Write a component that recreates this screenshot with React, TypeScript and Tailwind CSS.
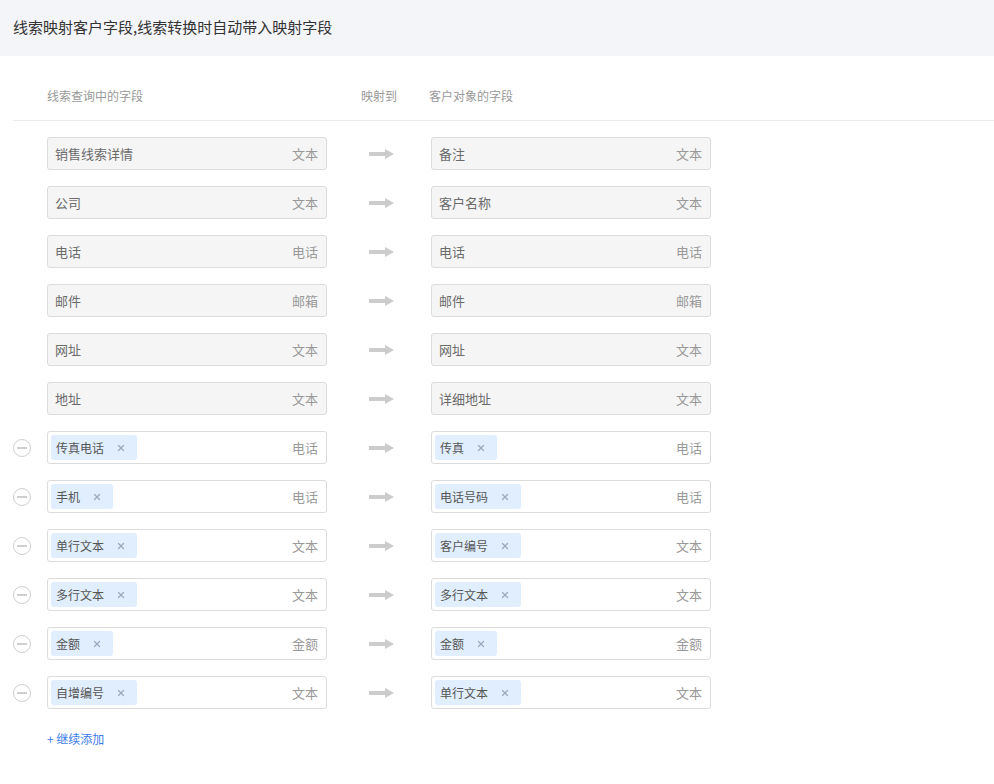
import { X } from "lucide-react";

type Row = {
  left: string;
  leftType: string;
  right: string;
  rightType: string;
  custom?: boolean;
};

const rows: Row[] = [
  { left: "销售线索详情", leftType: "文本", right: "备注", rightType: "文本" },
  { left: "公司", leftType: "文本", right: "客户名称", rightType: "文本" },
  { left: "电话", leftType: "电话", right: "电话", rightType: "电话" },
  { left: "邮件", leftType: "邮箱", right: "邮件", rightType: "邮箱" },
  { left: "网址", leftType: "文本", right: "网址", rightType: "文本" },
  { left: "地址", leftType: "文本", right: "详细地址", rightType: "文本" },
  { left: "传真电话", leftType: "电话", right: "传真", rightType: "电话", custom: true },
  { left: "手机", leftType: "电话", right: "电话号码", rightType: "电话", custom: true },
  { left: "单行文本", leftType: "文本", right: "客户编号", rightType: "文本", custom: true },
  { left: "多行文本", leftType: "文本", right: "多行文本", rightType: "文本", custom: true },
  { left: "金额", leftType: "金额", right: "金额", rightType: "金额", custom: true },
  { left: "自增编号", leftType: "文本", right: "单行文本", rightType: "文本", custom: true },
];

function FieldBox({ label, type, custom }: { label: string; type: string; custom?: boolean }) {
  if (!custom) {
    return (
      <div className="w-[280px] h-[33px] flex items-center justify-between pl-[7px] pr-2 bg-[#f5f5f5] border border-[#dcdcdc] rounded-[3px] text-[13px]">
        <span className="text-[#6b6b6b]">{label}</span>
        <span className="text-[#999]">{type}</span>
      </div>
    );
  }
  return (
    <div className="w-[280px] h-[33px] flex items-center justify-between pl-[3px] pr-2 bg-white border border-[#dcdcdc] rounded-[3px] text-[13px]">
      <span className="h-[25px] flex items-center gap-[12px] pl-[5px] pr-[11px] bg-[#e1eefe] rounded-[3px] text-[12px] text-[#555]">
        {label}
        <X className="w-[10px] h-[10px] text-[#9aaabb]" strokeWidth={3} />
      </span>
      <span className="text-[#999]">{type}</span>
    </div>
  );
}

function Arrow() {
  return (
    <svg width="26" height="12" viewBox="0 0 26 12" className="ml-[5px]">
      <rect x="0" y="4" width="17" height="4" fill="#cccccc" />
      <polygon points="16,1 25,6 16,11" fill="#cccccc" />
    </svg>
  );
}

export default function App() {
  return (
    <div className="w-[994px] min-h-[784px] bg-white" style={{ fontFamily: '"Noto Sans CJK SC", "Noto Sans", sans-serif' }}>
      {/* Title bar */}
      <div className="h-[56px] flex items-center px-[13px] pb-px bg-[#f4f5f9] text-[15px] text-[#333]">
        线索映射客户字段,线索转换时自动带入映射字段
      </div>

      {/* Column headers */}
      <div className="ml-[13px] h-[65px] pt-[16px] flex items-center border-b border-[#ebebeb] text-[12px] text-[#999]">
        <div className="w-[34px]" />
        <div className="w-[280px]">线索查询中的字段</div>
        <div className="w-[104px] text-center">映射到</div>
        <div className="ml-[-2px]">客户对象的字段</div>
      </div>

      {/* Mapping rows */}
      <div className="pl-[13px] pt-[16px] flex flex-col gap-[16px]">
        {rows.map((r, i) => (
          <div key={i} className="flex items-center">
            <div className="w-[34px]">
              {r.custom && (
                <div className="w-[18px] h-[18px] rounded-full border border-[#cfcfcf] flex items-center justify-center">
                  <div className="w-[10px] h-[2px] bg-[#cfcfcf]" />
                </div>
              )}
            </div>
            <FieldBox label={r.left} type={r.leftType} custom={r.custom} />
            <div className="w-[104px] flex justify-center">
              <Arrow />
            </div>
            <FieldBox label={r.right} type={r.rightType} custom={r.custom} />
          </div>
        ))}
      </div>

      <div className="pl-[47px] pt-[21px] text-[12px] text-[#3b7cf0]">+ 继续添加</div>
    </div>
  );
}
